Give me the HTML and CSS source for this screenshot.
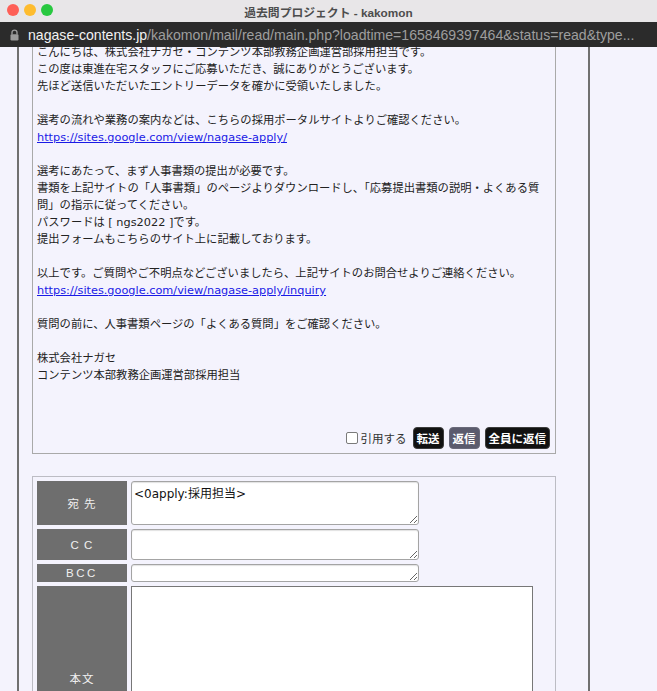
FILE: index.html
```html
<!DOCTYPE html>
<html lang="ja">
<head>
  <meta charset="UTF-8">
  <meta name="viewport" content="width=device-width, initial-scale=1.0">
  <title>過去問プロジェクト - kakomon</title>
  <link rel="stylesheet" href="styles.css">
</head>
<body>

  <div class="window">
    <!-- Window title bar -->
    <header class="titlebar">
      <div class="lights">
        <span class="light light-red"></span>
        <span class="light light-yellow"></span>
        <span class="light light-green"></span>
      </div>
      <div class="title">過去問プロジェクト - kakomon</div>
    </header>

    <!-- Address bar -->
    <div class="addressbar">
      <svg class="lock" width="9" height="12" viewBox="0 0 9 12">
        <path d="M2 5.5V3.6a2.5 2.5 0 0 1 5 0v1.9" fill="none" stroke="#9b9b9b" stroke-width="1.4"/>
        <rect x="0.5" y="5.2" width="8" height="6.3" rx="1.2" fill="#9b9b9b"/>
      </svg>
      <span class="url"><span class="host">nagase-contents.jp</span>/kakomon/mail/read/main.php?loadtime=1658469397464&amp;status=read&amp;type...</span>
    </div>

    <main class="viewport">
      <div class="page">
        <div class="frame">

          <!-- Received message -->
          <section class="message">
            <div class="message-body">
              こんにちは、株式会社ナガセ・コンテンツ本部教務企画運営部採用担当です。<br>
              この度は東進在宅スタッフにご応募いただき、誠にありがとうございます。<br>
              先ほど送信いただいたエントリーデータを確かに受領いたしました。<br>
              <br>
              選考の流れや業務の案内などは、こちらの採用ポータルサイトよりご確認ください。<br>
              <a href="#">https://sites.google.com/view/nagase-apply/</a><br>
              <br>
              選考にあたって、まず人事書類の提出が必要です。<br>
              書類を上記サイトの「人事書類」のページよりダウンロードし、「応募提出書類の説明・よくある質問」の指示に従ってください。<br>
              パスワードは [ ngs2022 ]です。<br>
              提出フォームもこちらのサイト上に記載しております。<br>
              <br>
              以上です。ご質問やご不明点などございましたら、上記サイトのお問合せよりご連絡ください。<br>
              <a href="#">https://sites.google.com/view/nagase-apply/inquiry</a><br>
              <br>
              質問の前に、人事書類ページの「よくある質問」をご確認ください。<br>
              <br>
              株式会社ナガセ<br>
              コンテンツ本部教務企画運営部採用担当
            </div>

            <div class="message-actions">
              <label class="quote"><input type="checkbox">引用する</label>
              <button class="btn">転送</button>
              <button class="btn btn-muted">返信</button>
              <button class="btn">全員に返信</button>
            </div>
          </section>

          <!-- Reply form -->
          <form class="compose">
            <table class="compose-table">
              <tr>
                <th class="label">宛 先</th>
                <td><textarea class="field field-to">&lt;0apply:採用担当&gt;</textarea></td>
              </tr>
              <tr>
                <th class="label">C C</th>
                <td><textarea class="field field-cc"></textarea></td>
              </tr>
              <tr>
                <th class="label label-bcc">BCC</th>
                <td><textarea class="field field-bcc"></textarea></td>
              </tr>
              <tr>
                <th class="label">本文</th>
                <td><textarea class="field-body"></textarea></td>
              </tr>
            </table>
          </form>

        </div>
      </div>
    </main>
  </div>

</body>
</html>
```

FILE: styles.css
```css
body {
  margin: 0;
  font-family: "DejaVu Sans", "Noto Sans CJK JP", sans-serif;
}

/* Browser window */
.window {
  height: 691px;
  display: flex;
  flex-direction: column;
  overflow: hidden;
}

/* Title bar */
.titlebar {
  height: 22px;
  display: grid;
  grid-template-columns: 1fr auto 1fr;
  align-items: center;
  background-color: #e8e6e8;
  font-family: "Liberation Sans", "Noto Sans CJK JP", sans-serif;
}

.lights {
  display: flex;
  gap: 5px;
  padding-left: 7px;
  margin-top: -2px;
}

.light {
  width: 12px;
  height: 12px;
  border-radius: 50%;
}

.light-red { background-color: #fe5f57; }
.light-yellow { background-color: #febc2e; }
.light-green { background-color: #28c840; }

.title {
  font-size: 11.8px;
  font-weight: bold;
  color: #4d4d4d;
}

/* Address bar */
.addressbar {
  height: 25px;
  display: flex;
  align-items: center;
  gap: 9px;
  padding-left: 10px;
  background-color: #2b2b2b;
  font-family: "Liberation Sans", sans-serif;
}

.url {
  font-size: 14.1px;
  color: #9e9e9e;
  white-space: nowrap;
}

.url .host {
  color: #f2f2f2;
}

/* Page area */
.viewport {
  flex: 1;
  overflow: hidden;
  background-color: #f4f3fd;
}

.page {
  margin-top: -8px;
}

.frame {
  margin-left: 17px;
  width: 524px;
  height: 900px;
  padding: 0 32px 0 13px;
  border-left: 2px solid #707070;
  border-right: 2px solid #707070;
}

/* Received message */
.message {
  width: 524px;
  box-sizing: border-box;
  border: 1px solid #a9a9a9;
  padding: 4px 5px 4px 4px;
}

.message-body {
  font-size: 11.3px;
  line-height: 17px;
  color: #222;
}

.message-body a {
  color: #1a1ae6;
}

.message-actions {
  display: flex;
  justify-content: flex-end;
  align-items: center;
  gap: 5px;
  margin-top: 43px;
}

.quote {
  display: flex;
  align-items: center;
  gap: 3px;
  margin-right: 1px;
  font-size: 11.5px;
  color: #333;
}

.quote input {
  appearance: none;
  width: 12px;
  height: 12px;
  margin: 0;
  border: 1px solid #7a7a7a;
  border-radius: 2px;
  background-color: #fff;
}

.btn {
  height: 22px;
  padding: 0 3px;
  border: 1px solid #3c3c3c;
  border-radius: 4px;
  background-color: #111;
  color: #fff;
  font-family: inherit;
  font-size: 11.5px;
  font-weight: bold;
}

.btn-muted {
  background-color: #5b5b6d;
  border-color: #6a6a7a;
}

/* Reply form */
.compose {
  width: 524px;
  box-sizing: border-box;
  margin: 22px 0 0;
  border: 1px solid #bcbcc4;
}

.compose-table {
  border-spacing: 4px;
}

.compose-table td {
  padding: 0;
  vertical-align: top;
}

.label {
  width: 90px;
  padding: 0;
  background-color: #6e6e6e;
  color: #f0f0f0;
  font-family: "Liberation Sans", "Noto Sans CJK JP", sans-serif;
  font-size: 11.5px;
  font-weight: normal;
  letter-spacing: 1px;
}

.label-bcc {
  letter-spacing: 2.5px;
}

.field {
  display: block;
  width: 288px;
  box-sizing: border-box;
  margin: 0;
  padding: 2px;
  border: 1px solid #a4a4a4;
  border-radius: 3px;
  box-shadow: inset 0 1px 1px rgba(0, 0, 0, 0.12);
  background-color: #fff;
  font-family: inherit;
  font-size: 12px;
  color: #111;
}

.field-to { height: 44px; }
.field-cc { height: 31px; }
.field-bcc { height: 18px; }

.field-body {
  display: block;
  width: 402px;
  height: 184px;
  box-sizing: border-box;
  margin: 0;
  border: 1px solid #777;
  background-color: #fff;
  resize: none;
}
```
